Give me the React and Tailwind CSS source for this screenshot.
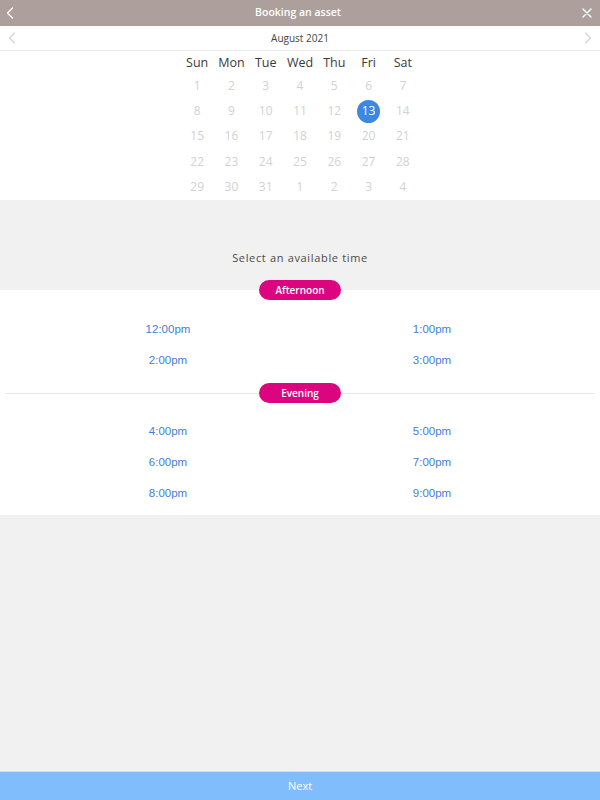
import React from 'react';

const weekDays = ['Sun', 'Mon', 'Tue', 'Wed', 'Thu', 'Fri', 'Sat'];
const days = [
  1, 2, 3, 4, 5, 6, 7,
  8, 9, 10, 11, 12, 13, 14,
  15, 16, 17, 18, 19, 20, 21,
  22, 23, 24, 25, 26, 27, 28,
  29, 30, 31, 1, 2, 3, 4,
];

const afternoon = [['12:00pm', '1:00pm'], ['2:00pm', '3:00pm']];
const evening = [['4:00pm', '5:00pm'], ['6:00pm', '7:00pm'], ['8:00pm', '9:00pm']];

const Chevron = ({ dir = 'left', className }) => (
  <svg width="8" height="12" viewBox="0 0 8 12" fill="none" className={className}>
    <path
      d={dir === 'left' ? 'M6.5 1 L1.5 6 L6.5 11' : 'M1.5 1 L6.5 6 L1.5 11'}
      stroke="currentColor"
      strokeWidth="1.2"
      strokeLinecap="round"
      strokeLinejoin="round"
    />
  </svg>
);

function Pill({ children }) {
  return (
    <span className="flex h-[20px] w-[82px] items-center justify-center rounded-full bg-[#dc0580] text-[10px] font-semibold text-white">
      {children}
    </span>
  );
}

function TimeRows({ rows }) {
  return (
    <div className="px-[36px]">
      {rows.map(([a, b]) => (
        <div key={a} className="grid h-[31px] grid-cols-2 items-center text-center font-['Liberation_Sans',Arial,sans-serif] text-[11.5px] text-[#3f80d9]">
          <span>{a}</span>
          <span>{b}</span>
        </div>
      ))}
    </div>
  );
}

export default function App() {
  return (
    <div className="flex h-[800px] w-[600px] flex-col bg-[#f1f1f1] font-['Open_Sans',sans-serif]">
      <header className="flex h-[26px] shrink-0 items-center justify-between bg-[#ad9f9c] px-[6px] text-white">
        <Chevron className="text-white" />
        <span className="text-[10.5px] font-semibold">Booking an asset</span>
        <svg width="10" height="10" viewBox="0 0 10 10" className="mr-[2px]">
          <path d="M1 1 L9 9 M9 1 L1 9" stroke="white" strokeWidth="1.4" strokeLinecap="round" />
        </svg>
      </header>

      <div className="flex h-[25px] shrink-0 items-center justify-between border-b border-[#ececec] bg-white px-[8px]">
        <Chevron className="text-[#d4d4d4]" />
        <span className="text-[10px] text-[#444]">August 2021</span>
        <Chevron dir="right" className="text-[#d4d4d4]" />
      </div>

      <div className="flex h-[149px] shrink-0 justify-center bg-white pt-[2px]">
        <div className="grid w-[240px] grid-cols-7 content-start">
          {weekDays.map((d) => (
            <div key={d} className="flex h-[20px] items-center justify-center text-[12.5px] text-[#3a3a3a]">
              {d}
            </div>
          ))}
          {days.map((d, i) => (
            <div key={i} className="flex h-[25.4px] items-center justify-center text-[12px] text-[#d2d2d2]">
              {i === 12 ? (
                <span className="flex h-[23px] w-[23px] items-center justify-center rounded-full bg-[#3d87e0] text-white">
                  {d}
                </span>
              ) : (
                d
              )}
            </div>
          ))}
        </div>
      </div>

      <div className="h-[90px] shrink-0 pt-[50px] text-center text-[11px] leading-[16px] tracking-[0.06em] text-[#4a4a4a]">
        Select an available time
      </div>

      <div className="shrink-0 bg-white pb-[5.5px]">
        <div className="-mt-[10px] flex justify-center">
          <Pill>Afternoon</Pill>
        </div>
        <div className="pt-[14.5px]">
          <TimeRows rows={afternoon} />
        </div>
        <div className="flex h-[33px] items-center px-[6px]">
          <div className="h-px flex-1 bg-[#e6e6e6]" />
          <Pill>Evening</Pill>
          <div className="h-px flex-1 bg-[#e6e6e6]" />
        </div>
        <div className="pt-[7px]">
          <TimeRows rows={evening} />
        </div>
      </div>

      <div className="flex-1" />

      <button className="flex h-[29px] shrink-0 items-center justify-center border-t border-[#c9dff5] bg-[#7fbdfd] text-[11px] text-white">
        Next
      </button>
    </div>
  );
}
